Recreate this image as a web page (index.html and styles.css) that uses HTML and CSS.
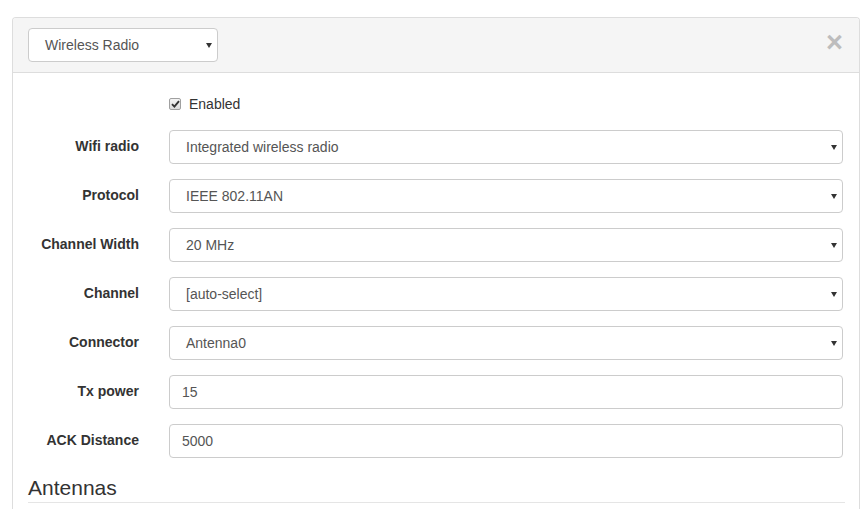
FILE: index.html
```html
<!DOCTYPE html>
<html>
<head>
<meta charset="utf-8">
<link rel="stylesheet" href="styles.css">
</head>
<body>
<div class="page">
  <div class="panel">
    <div class="panel-head">
      <div class="select head-select"><span>Wireless Radio</span><i class="caret"></i></div>
      <span class="close">&times;</span>
    </div>
    <div class="panel-body">
      <div class="check-row">
        <span class="checkbox"><svg width="9" height="8" viewBox="0 0 9 8"><path d="M1 4.2 L3.4 6.6 L8 1.2" fill="none" stroke="#333" stroke-width="1.9"/></svg></span>
        <span class="check-label">Enabled</span>
      </div>
      <div class="row"><label>Wifi radio</label><div class="select"><span>Integrated wireless radio</span><i class="caret"></i></div></div>
      <div class="row"><label>Protocol</label><div class="select"><span>IEEE 802.11AN</span><i class="caret"></i></div></div>
      <div class="row"><label>Channel Width</label><div class="select"><span>20 MHz</span><i class="caret"></i></div></div>
      <div class="row"><label>Channel</label><div class="select"><span>[auto-select]</span><i class="caret"></i></div></div>
      <div class="row"><label>Connector</label><div class="select"><span>Antenna0</span><i class="caret"></i></div></div>
      <div class="row"><label>Tx power</label><div class="input">15</div></div>
      <div class="row"><label>ACK Distance</label><div class="input">5000</div></div>
      <h3 class="section">Antennas</h3>
    </div>
  </div>
</div>
</body>
</html>
```
FILE: styles.css
```css
html, body {
  margin: 0;
  padding: 0;
  background: #fff;
  font-family: "Liberation Sans", Arial, sans-serif;
  font-size: 14px;
  color: #333;
}
.page {
  padding: 17px 7px 0 12px;
  height: 492px;
  overflow: hidden;
}
.panel {
  border: 1px solid #ddd;
  border-bottom: none;
  border-radius: 4px 4px 0 0;
  height: 600px;
}
.panel-head {
  background: #f5f5f5;
  border-bottom: 1px solid #ddd;
  padding: 10px 15px;
  display: flex;
  align-items: center;
  justify-content: space-between;
  border-radius: 3px 3px 0 0;
}
.select, .input {
  box-sizing: border-box;
  height: 34px;
  border: 1px solid #ccc;
  border-radius: 4px;
  background: #fff;
  color: #555;
  font-size: 14px;
  display: flex;
  align-items: center;
}
.select {
  padding: 0 5px 0 16px;
  justify-content: space-between;
}
.input {
  padding: 0 12px;
}
.head-select {
  width: 190px;
}
.caret {
  width: 0;
  height: 0;
  border-left: 3.5px solid transparent;
  border-right: 3.5px solid transparent;
  border-top: 5px solid #333;
  margin-top: 1px;
}
.close {
  font-size: 29px;
  font-weight: bold;
  color: #bdbdbd;
  line-height: 1;
  margin-top: -6px;
  margin-right: 1px;
}
.panel-body {
  padding: 20px 16px 0 15px;
}
.check-row {
  display: flex;
  align-items: center;
  height: 22px;
  margin-left: 141px;
  margin-bottom: 15px;
}
.checkbox {
  box-sizing: border-box;
  width: 12px;
  height: 12px;
  border: 1px solid #a0a0a0;
  border-radius: 2px;
  background: linear-gradient(#f4f4f4, #dcdcdc);
  display: flex;
  align-items: center;
  justify-content: center;
  margin-right: 8px;
}
.check-label {
  color: #333;
}
.row {
  display: grid;
  grid-template-columns: 111px 1fr;
  column-gap: 30px;
  align-items: center;
  margin-bottom: 15px;
}
.row label {
  font-weight: bold;
  text-align: right;
  color: #333;
  padding-bottom: 2px;
}
.section {
  margin: 18px 0 0 0;
  font-size: 21px;
  font-weight: normal;
  line-height: 23px;
  padding-bottom: 3px;
  border-bottom: 1px solid #e5e5e5;
  color: #333;
  margin-right: -2px;
}
```
